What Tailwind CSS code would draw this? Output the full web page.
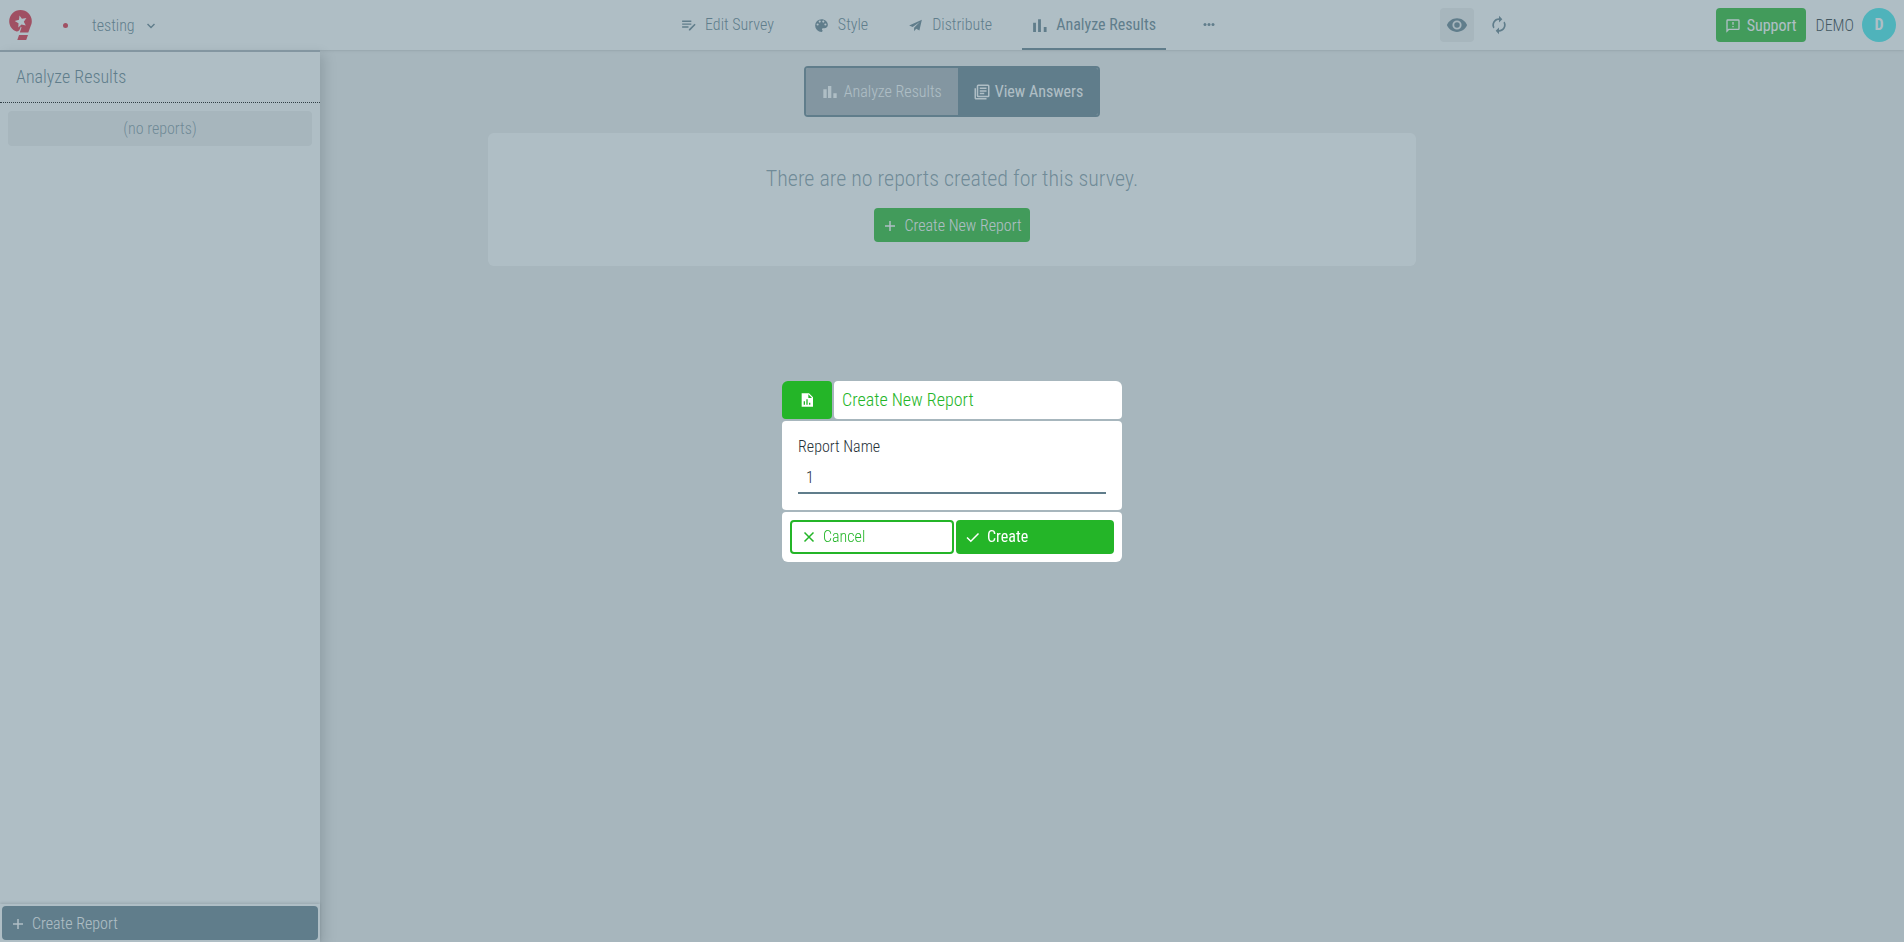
<!DOCTYPE html>
<html lang="en">
<head>
    <meta charset="UTF-8">
    <meta name="viewport" content="width=device-width, initial-scale=1.0">
    <title>Analyze Results</title>
    <script src="https://cdn.jsdelivr.net/npm/@tailwindcss/browser@4"></script>
</head>
<body class="bg-[#eeeeee] font-['Roboto_Condensed','Liberation_Sans_Narrow',Roboto,sans-serif] font-light text-base text-[#607d8b]">
    <div class="flex flex-col h-screen overflow-hidden">

        <!-- Top bar -->
        <header class="relative z-10 grid grid-cols-[1fr_auto_1fr] items-center h-[50px] shrink-0 bg-white shadow">
            <div class="flex items-center pl-2">
                <a href="#" aria-label="Home" class="block">
                    <svg class="w-6 h-8" viewBox="0 0 24 32" fill="#e0233a">
                        <path fill-rule="evenodd" d="M12.500 1A11.300 11.300 0 0 1 23.800 12.300c0 2-.5 3.500-1.200 5L20.300 23.500H11.800L13.500 18.500 12.800 17.500C12 20.500 11 22.500 8.500 22.500 4 21 1.200 17 1.200 12.300A11.300 11.300 0 0 1 12.500 1zM11.500 6.500l-.5 4.200-4.300 1.300 3.800 2.300-.2 4.200 3.200-2.900 4.300 1-2-3.900 2.600-3.600-4.500.7z"/>
                        <path d="M11 26h9l-1.800 5H9.300z"/>
                    </svg>
                </a>
                <span class="ml-[31px] w-[5px] h-[5px] rounded-full bg-[#e0233a]"></span>
                <button class="ml-6 pt-[2px] flex items-center gap-3">
                    testing
                    <svg class="w-2 h-2" viewBox="0 0 8 8" fill="none" stroke="currentColor" stroke-width="1.500"><path d="M.5 2L4 5.500 7.500 2"/></svg>
                </button>
            </div>

            <nav class="flex h-[50px] gap-5">
                <a href="#" class="flex items-center gap-2 pl-[9px] pr-[10px]">
                    <svg class="w-[17px] h-[17px]" viewBox="0 0 24 24" fill="currentColor"><path d="M3 9h13v2H3V9zm0-4h13v2H3V5zm0 8h9v2H3v-2zm17.500-3.500l1.600 1.600-7.800 7.900H12.500v-1.700z"/></svg>
                    Edit Survey
                </a>
                <a href="#" class="flex items-center gap-2 pl-[9px] pr-[10px]">
                    <svg class="w-[17px] h-[17px]" viewBox="0 0 24 24" fill="currentColor"><path d="M12 3a9 9 0 0 0 0 18c.83 0 1.500-.67 1.500-1.500 0-.39-.15-.74-.39-1.010-.23-.26-.38-.61-.38-.99 0-.83.67-1.500 1.500-1.500H16c2.760 0 5-2.240 5-5 0-4.420-4.030-8-9-8zm-5.500 9a1.500 1.500 0 1 1 0-3 1.500 1.500 0 0 1 0 3zm3-4a1.500 1.500 0 1 1 0-3 1.500 1.500 0 0 1 0 3zm5 0a1.500 1.500 0 1 1 0-3 1.500 1.500 0 0 1 0 3zm3 4a1.500 1.500 0 1 1 0-3 1.500 1.500 0 0 1 0 3z"/></svg>
                    Style
                </a>
                <a href="#" class="flex items-center gap-2 pl-[9px] pr-[10px]">
                    <svg class="w-[17px] h-[17px]" viewBox="0 0 24 24" fill="currentColor"><path d="M21 4L3 12l5 2.200L18 7l-8 8.200V20l3-3.300 4.500 2.300z"/></svg>
                    Distribute
                </a>
                <a href="#" class="flex items-center gap-2 pl-[9px] pr-[10px] border-b-2 border-[#607d8b] pt-[2px] font-normal">
                    <svg class="w-[17px] h-[17px]" viewBox="0 0 24 24" fill="currentColor"><path d="M3 8h4v13H3zM10 3h4v18h-4zM18 14h4v7h-4z"/></svg>
                    Analyze Results
                </a>
                <button aria-label="More" class="flex items-center justify-center w-[47px]">
                    <svg class="w-3 h-3" viewBox="0 0 12 12" fill="currentColor"><circle cx="2" cy="5.500" r="1.500"/><circle cx="6" cy="5.500" r="1.500"/><circle cx="10" cy="5.500" r="1.500"/></svg>
                </button>
            </nav>

            <div class="flex items-center pr-2">
                <div class="flex flex-1 justify-center gap-2 pl-2">
                    <button aria-label="Preview" class="flex items-center justify-center w-[34px] h-[34px] rounded bg-[#eeeeee]">
                        <svg class="w-[22px] h-[22px]" viewBox="0 0 24 24" fill="currentColor"><path d="M12 4.500C7 4.500 2.730 7.610 1 12c1.730 4.390 6 7.500 11 7.500s9.270-3.110 11-7.500c-1.730-4.390-6-7.500-11-7.500zM12 17a5 5 0 1 1 0-10 5 5 0 0 1 0 10zm0-8a3 3 0 1 0 0 6 3 3 0 0 0 0-6z"/></svg>
                    </button>
                    <button aria-label="Refresh" class="flex items-center justify-center w-[34px] h-[34px]">
                        <svg class="w-5 h-5" viewBox="0 0 24 24" fill="currentColor"><path d="M12 6v3l4-4-4-4v3a8 8 0 0 0-6.760 12.260L6.700 14.800A5.870 5.870 0 0 1 6 12a6 6 0 0 1 6-6zm6.760 1.740L17.300 9.200c.44.840.7 1.790.7 2.800a6 6 0 0 1-6 6v-3l-4 4 4 4v-3a8 8 0 0 0 6.760-12.260z"/></svg>
                    </button>
                </div>
                <button class="flex items-center gap-[6px] h-[34px] px-[9px] pt-[2px] rounded bg-[#24b92b] text-white font-normal">
                    <svg class="w-4 h-4" viewBox="0 0 24 24" fill="currentColor"><path d="M20 2H4a2 2 0 0 0-2 2v18l4-4h14a2 2 0 0 0 2-2V4a2 2 0 0 0-2-2zm0 14H5.200L4 17.200V4h16v12zM11 12h2v2h-2zM11 6h2v4h-2z"/></svg>
                    Support
                </button>
                <span class="ml-[10px] pt-[2px] text-[#263238]">DEMO</span>
                <span class="ml-2 flex items-center justify-center w-[34px] h-[34px] rounded-full bg-[#3ee9eb] text-white font-bold">D</span>
            </div>
        </header>

        <div class="relative flex-1">
            <!-- Reports sidebar, lies over the page -->
            <aside class="absolute inset-y-0 left-0 z-20 w-[320px] flex flex-col bg-white shadow-[4px_4px_12px_rgba(0,0,0,0.2)] border-t-2 border-[#a6afb7]">
                <h2 class="flex items-center h-[51px] px-4 border-b border-dotted border-black text-lg">Analyze Results</h2>
                <p class="flex items-center justify-center h-[35px] m-2 rounded bg-[#eeeeee] text-[#607d8b]/80">(no reports)</p>
                <div class="mt-auto p-[2px] shadow-[0_-1px_3px_rgba(0,0,0,0.2)]">
                    <button class="flex items-center gap-[6px] w-full h-[34px] px-2 pt-[2px] rounded bg-[#607d8b] text-white">
                        <svg class="w-4 h-4" viewBox="0 0 16 16" stroke="currentColor" stroke-width="1.500"><path d="M8 3v10M3 8h10"/></svg>
                        Create Report
                    </button>
                </div>
            </aside>

            <main class="flex flex-col items-center pt-4">
                <div class="flex h-[51px] rounded border-2 border-[#607d8b] overflow-hidden text-white">
                    <button class="flex items-center gap-[6px] px-4 bg-[#a6afb7]">
                        <svg class="w-4 h-4" viewBox="0 0 24 24" fill="currentColor"><path d="M2 8h5v13H2zM9 3h5v18H9zM17 14h5v7h-5z"/></svg>
                        Analyze Results
                    </button>
                    <button class="flex items-center gap-1 pl-[15px] pr-[15px] bg-[#607d8b] font-normal">
                        <svg class="w-[18px] h-[18px]" viewBox="0 0 24 24" fill="currentColor"><path d="M4 7H2v13c0 1.100.9 2 2 2h14v-2H4z"/><path fill-rule="evenodd" d="M7 2h13a2 2 0 0 1 2 2v13a2 2 0 0 1-2 2H7a2 2 0 0 1-2-2V4a2 2 0 0 1 2-2zm0 2v13h13V4zM9 6h9v2H9zM9 9.500h9v2H9zM9 13h6v2H9z"/></svg>
                        View Answers
                    </button>
                </div>

                <section class="mt-4 w-full max-w-[928px] rounded-md bg-white flex flex-col items-center py-6">
                    <p class="h-[51px] pt-[5px] text-[22px] text-[#607d8b]/80">There are no reports created for this survey.</p>
                    <button class="flex items-center gap-[6px] h-[34px] px-2 pt-[2px] rounded bg-[#24b92b] text-white">
                        <svg class="w-4 h-4" viewBox="0 0 16 16" stroke="currentColor" stroke-width="1.500"><path d="M8 3v10M3 8h10"/></svg>
                        Create New Report
                    </button>
                </section>
            </main>
        </div>
    </div>

    <!-- Create report dialog -->
    <div class="fixed inset-0 z-50 flex items-center justify-center bg-[#607d8b]/50">
        <form role="dialog" aria-labelledby="dialog-title" class="w-[340px] flex flex-col gap-[2px]">
            <div class="flex gap-[2px] h-[38px] text-[#24b528]">
                <div class="flex items-center justify-center w-[50px] rounded-sm rounded-tl-md bg-[#24b528] text-white">
                    <svg class="w-4 h-4" viewBox="0 0 24 24" fill="currentColor"><path fill-rule="evenodd" d="M4 2h11l6 6v14H4zM14 3.500V9h5.500zM7 14h2v5H7zM11 11h2v8h-2zM15 16h2v3h-2z"/></svg>
                </div>
                <h2 id="dialog-title" class="flex flex-1 items-center px-2 rounded-sm rounded-tr-md bg-white text-lg">Create New Report</h2>
            </div>
            <div class="flex flex-col p-4 rounded-sm bg-white">
                <label for="report-name" class="h-[23px] leading-5 text-[#263238]">Report Name</label>
                <input id="report-name" type="text" value="1" class="h-[34px] px-2 pt-1 border-b-2 border-[#607d8b] text-[#263238] outline-none">
            </div>
            <div class="flex gap-[2px] p-2 rounded-sm rounded-b-md bg-white">
                <button type="button" class="flex items-center gap-[6px] w-[164px] h-[34px] px-[9px] rounded-l rounded-r-sm border-2 border-[#24b528] text-[#24b528]">
                    <svg class="w-4 h-4" viewBox="0 0 16 16" stroke="currentColor" stroke-width="1.500"><path d="M3.500 3.500l9 9M12.500 3.500l-9 9"/></svg>
                    Cancel
                </button>
                <button type="submit" class="flex flex-1 items-center gap-[6px] h-[34px] px-[9px] rounded-r rounded-l-sm bg-[#24b528] text-white font-normal">
                    <svg class="w-4 h-4" viewBox="0 0 16 16" fill="none" stroke="currentColor" stroke-width="1.500"><path d="M2 8.500L5.800 12.200 13.500 4.500"/></svg>
                    Create
                </button>
            </div>
        </form>
    </div>
</body>
</html>
